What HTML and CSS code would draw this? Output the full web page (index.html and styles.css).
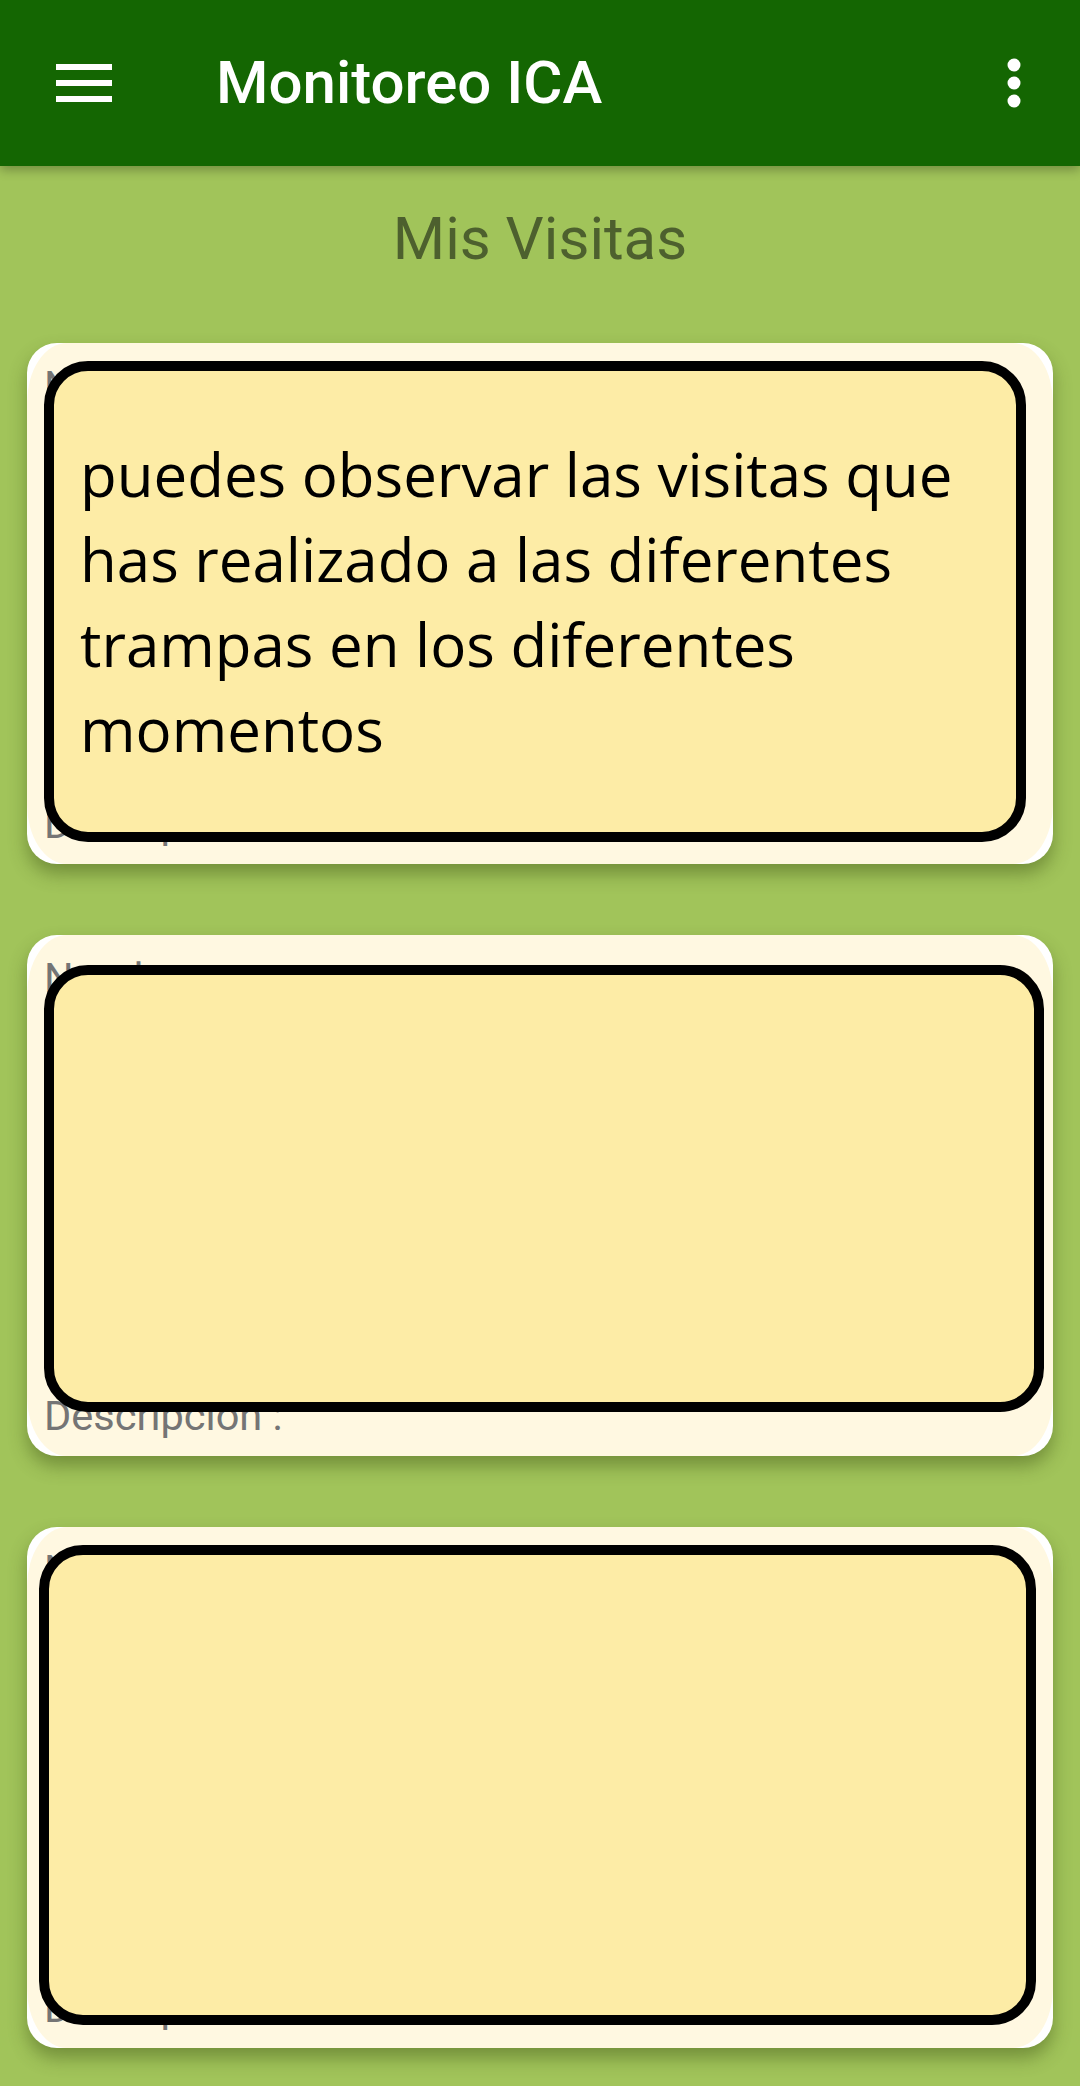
FILE: index.html
```html
<!DOCTYPE html>
<html lang="es">
<head>
<meta charset="utf-8">
<title>Monitoreo ICA</title>
<link rel="stylesheet" href="styles.css">
</head>
<body>
<header class="appbar">
  <svg class="icon-menu" width="56" height="38" viewBox="0 0 56 38" aria-hidden="true">
    <rect x="0" y="0" width="56" height="6" fill="#fff"/>
    <rect x="0" y="16" width="56" height="6" fill="#fff"/>
    <rect x="0" y="32" width="56" height="6" fill="#fff"/>
  </svg>
  <div class="appbar-title">Monitoreo ICA</div>
  <svg class="icon-more" width="14" height="50" viewBox="0 0 14 50" aria-hidden="true">
    <circle cx="7" cy="7" r="6.5" fill="#fff"/>
    <circle cx="7" cy="25" r="6.5" fill="#fff"/>
    <circle cx="7" cy="43" r="6.5" fill="#fff"/>
  </svg>
</header>

<h1 class="page-title">Mis Visitas</h1>

<main class="list">
  <article class="card">
    <div class="card-fill">
      <p class="label">Nombre :</p>
      <p class="label">Descripcion :</p>
    </div>
    <div class="coach coach-1">
      <p class="coach-text">puedes observar las visitas que has realizado a las diferentes trampas en los diferentes momentos</p>
    </div>
  </article>

  <article class="card">
    <div class="card-fill">
      <p class="label">Nombre :</p>
      <p class="label">Descripcion :</p>
    </div>
    <div class="coach coach-2"></div>
  </article>

  <article class="card">
    <div class="card-fill">
      <p class="label">Nombre :</p>
      <p class="label">Descripcion :</p>
    </div>
    <div class="coach coach-3"></div>
  </article>
</main>
</body>
</html>
```

FILE: styles.css
```css
html, body {
  margin: 0;
  padding: 0;
}

body {
  background: #a1c45a;
  font-family: Roboto, "Liberation Sans", sans-serif;
  width: 1080px;
  min-height: 2086px;
  overflow: hidden;
}

.appbar {
  position: relative;
  z-index: 2;
  height: 166px;
  background: #146602;
  display: flex;
  align-items: center;
  padding: 0 59px 0 56px;
  box-shadow: 0 4px 10px rgba(0, 0, 0, 0.28);
}

.icon-menu {
  display: block;
  flex: none;
}

.appbar-title {
  flex: 1;
  margin-left: 104px;
  color: #ffffff;
  font-family: Roboto, sans-serif;
  font-weight: 500;
  font-size: 60px;
  line-height: 70px;
}

.icon-more {
  display: block;
  flex: none;
}

.page-title {
  margin: 38px 0 0;
  text-align: center;
  font-family: Roboto, sans-serif;
  font-weight: 400;
  font-size: 60px;
  line-height: 70px;
  color: #4d602e;
}

.list {
  display: flex;
  flex-direction: column;
  gap: 71px;
  padding: 69px 27px 0;
}

.card {
  position: relative;
  height: 521px;
  background: #ffffff;
  border-radius: 30px;
  box-shadow: 0 10px 18px rgba(60, 80, 20, 0.45);
}

.card-fill {
  box-sizing: border-box;
  height: 100%;
  background: #fff8e1;
  border-radius: 40px / 60px;
  display: flex;
  flex-direction: column;
  justify-content: space-between;
  padding: 19px 17px 17px;
}

.label {
  margin: 0;
  font-family: Roboto, sans-serif;
  font-size: 41.5px;
  line-height: 47px;
  color: #757575;
}

.coach {
  position: absolute;
  box-sizing: border-box;
  background: #fdeca6;
  border: 10px solid #000000;
  border-radius: 44px;
  display: flex;
  align-items: center;
  padding: 0 16px 0 26px;
}

.coach-1 {
  left: 17px;
  top: 18px;
  right: 27px;
  bottom: 22px;
}

.coach-2 {
  left: 17px;
  top: 30px;
  right: 9px;
  bottom: 44px;
}

.coach-3 {
  left: 12px;
  top: 18px;
  right: 17px;
  bottom: 23px;
}

.coach-text {
  margin: 0;
  font-family: "Open Sans", "Noto Sans", sans-serif;
  font-size: 60px;
  line-height: 85px;
  color: #000000;
}
```
